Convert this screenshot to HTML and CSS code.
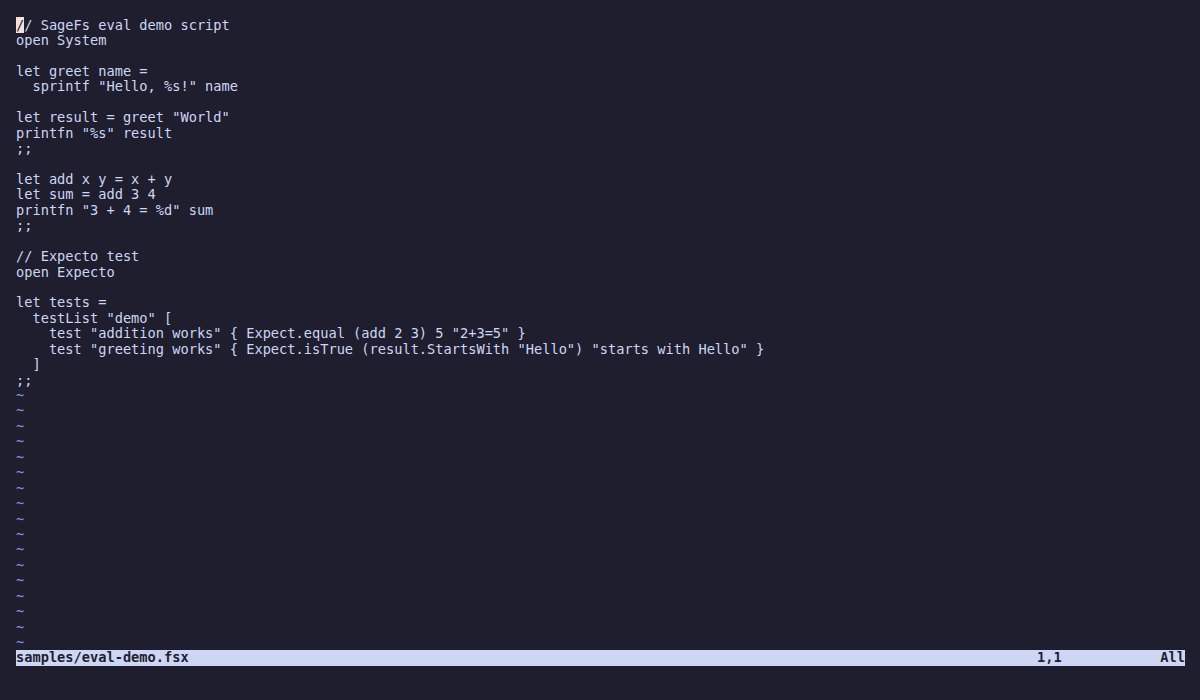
FILE: index.html
```html
<!DOCTYPE html>
<html>
<head>
<meta charset="utf-8">
<link rel="stylesheet" href="styles.css">
</head>
<body>
<div class="screen">
<pre class="buffer"><span class="cursor">/</span>/ SageFs eval demo script
open System

let greet name =
  sprintf "Hello, %s!" name

let result = greet "World"
printfn "%s" result
;;

let add x y = x + y
let sum = add 3 4
printfn "3 + 4 = %d" sum
;;

// Expecto test
open Expecto

let tests =
  testList "demo" [
    test "addition works" { Expect.equal (add 2 3) 5 "2+3=5" }
    test "greeting works" { Expect.isTrue (result.StartsWith "Hello") "starts with Hello" }
  ]
;;
<span class="tilde">~
~
~
~
~
~
~
~
~
~
~
~
~
~
~
~
~</span></pre>
<div class="status">
<span class="file">samples/eval-demo.fsx</span>
<span class="ruler"><span class="pos">1,1</span><span class="all">All</span></span>
</div>
</div>
</body>
</html>
```

FILE: styles.css
```css
html, body {
  margin: 0;
  padding: 0;
  background: #1e1e2e;
}
.screen {
  width: 1200px;
  height: 700px;
  box-sizing: border-box;
  padding: 17.5px 15px 0 16px;
  font-family: "DejaVu Sans Mono", monospace;
  font-size: 13.66px;
  line-height: 15.43px;
  color: #cdd6f4;
}
.buffer {
  margin: 0;
  font: inherit;
  white-space: pre;
}
.cursor {
  background: #f5e0dc;
  color: #1e1e2e;
}
.tilde {
  color: #7c95e0;
}
.status {
  display: flex;
  justify-content: space-between;
  background: #cdd6f4;
  color: #1e1e2e;
  font-weight: bold;
  height: 15.43px;
  white-space: pre;
}
.ruler {
  display: flex;
  justify-content: space-between;
  width: 18ch;
}
```
